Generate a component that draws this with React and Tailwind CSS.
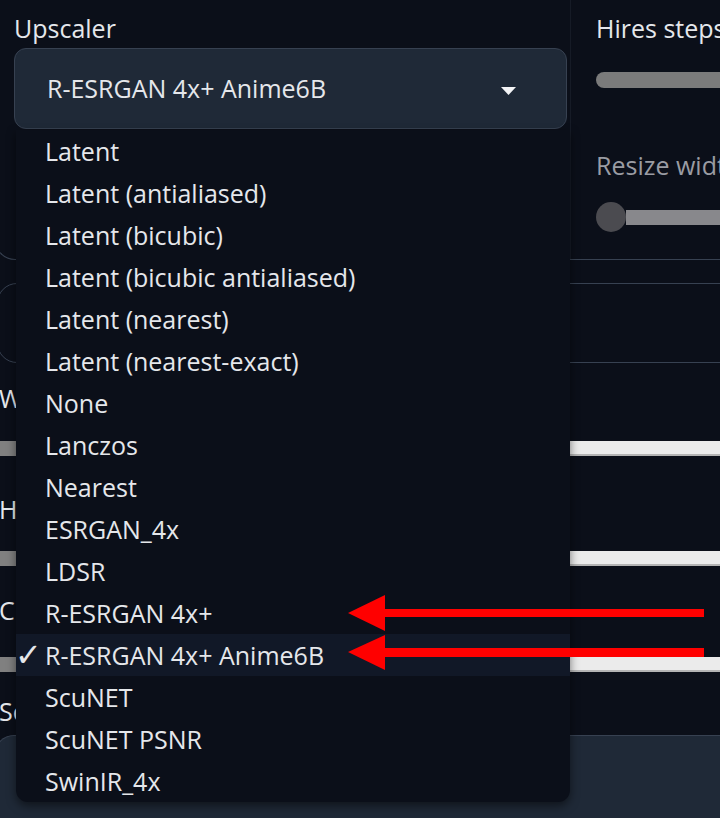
import React from "react";

const items = [
  "Latent",
  "Latent (antialiased)",
  "Latent (bicubic)",
  "Latent (bicubic antialiased)",
  "Latent (nearest)",
  "Latent (nearest-exact)",
  "None",
  "Lanczos",
  "Nearest",
  "ESRGAN_4x",
  "LDSR",
  "R-ESRGAN 4x+",
  "R-ESRGAN 4x+ Anime6B",
  "ScuNET",
  "ScuNET PSNR",
  "SwinIR_4x",
];
const selected = "R-ESRGAN 4x+ Anime6B";

function Slider({ fill = 560 }) {
  return (
    <div className="flex items-center h-[30px] w-[800px]">
      <div className="h-[15px] bg-[#808080]" style={{ width: fill }} />
      <div className="h-[15px] flex-1 bg-[#ebebeb] border-b-2 border-[#b4b4b4]" />
    </div>
  );
}

export default function App() {
  return (
    <div className="relative w-[720px] h-[818px] overflow-hidden bg-[#0b0f19] text-[#e5e7eb] font-['Open_Sans',sans-serif] text-[25px]">
      {/* top section box */}
      <div className="flex -ml-[5px] h-[260px] border-b border-l border-[#374151] rounded-bl-[20px]">
        <div className="w-[574px] shrink-0 pl-[18px] pr-[3px] pt-[13px]">
          <div className="leading-[30px]">Upscaler</div>
          <div className="mt-[5px] h-[81px] rounded-[12px] border border-[#374151] bg-[#1f2937] flex items-center justify-between pl-[32px] pr-[50px]">
            <span className="leading-none">R-ESRGAN 4x+ Anime6B</span>
            <svg width="15" height="8" viewBox="0 0 15 8" className="mt-[4px]">
              <polygon points="0,0 15,0 7.5,8" fill="#f3f4f6" />
            </svg>
          </div>
        </div>
        <div className="flex-1 pl-[25px] pt-[13px] border-l border-[#161b26]">
          <div className="leading-[30px] whitespace-nowrap">Hires steps</div>
          <div className="mt-[29px] h-[16px] w-[200px] rounded-full bg-[#7b7b7b]" />
          <div className="mt-[62px] leading-[30px] whitespace-nowrap text-[#9a9ca3]">Resize width</div>
          <div className="mt-[22px] flex items-center w-[200px]">
            <div className="w-[30px] h-[30px] rounded-full bg-[#4b4b50] shrink-0" />
            <div className="flex-1 h-[15px] bg-[#88888c]" />
          </div>
        </div>
      </div>

      {/* bordered box */}
      <div className="mt-[23px] -ml-[3px] w-[800px] h-[80px] rounded-[20px] border border-[#374151]" />

      {/* width */}
      <div className="mt-[20px] -ml-[1px] leading-[30px] whitespace-nowrap">Width</div>
      <div className="mt-[20px]">
        <Slider />
      </div>
      <div className="mt-[31px] -ml-[1px] leading-[30px] whitespace-nowrap">Height</div>
      <div className="mt-[19px]">
        <Slider />
      </div>
      <div className="mt-[22px] -ml-[1px] leading-[30px] whitespace-nowrap">CFG Scale</div>
      <div className="mt-[24px]">
        <Slider />
      </div>
      <div className="mt-[17px] -ml-[1px] leading-[30px] whitespace-nowrap">Seed</div>
      <div className="mt-[9px] -ml-[6px] w-[800px] h-[90px] rounded-[20px] border-t border-l border-[#374151] bg-[#1f2937]" />

      {/* dropdown list */}
      <ul className="absolute left-[16px] top-[130px] w-[554px] rounded-b-[12px] bg-[#0b0f19] shadow-[0_4px_10px_rgba(0,0,0,0.5)] overflow-hidden">
        {items.map((it) => (
          <li
            key={it}
            className={
              "h-[42px] flex items-center whitespace-nowrap " +
              (it === selected ? "bg-[#111827]" : "")
            }
          >
            <span className="w-[30px] shrink-0 text-[32px] leading-none font-['DejaVu_Sans',sans-serif] -ml-[1px]">
              {it === selected ? "✓" : ""}
            </span>
            <span className="leading-none">{it}</span>
          </li>
        ))}
      </ul>

      {/* red arrows */}
      <svg className="absolute left-0 top-0 pointer-events-none" width="720" height="818" viewBox="0 0 720 818">
        <rect x="384" y="609" width="320" height="8" fill="#ff0000" />
        <polygon points="348,613 385,595 385,631" fill="#ff0000" />
        <rect x="384" y="648" width="320" height="9" fill="#ff0000" />
        <polygon points="348,652 385,635 385,670" fill="#ff0000" />
      </svg>
    </div>
  );
}
